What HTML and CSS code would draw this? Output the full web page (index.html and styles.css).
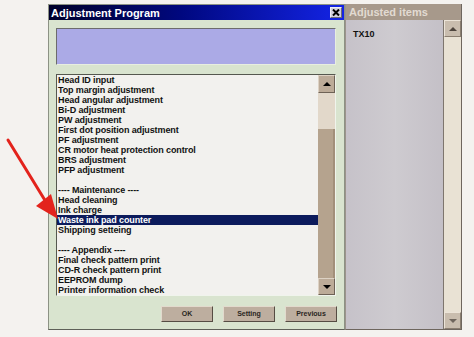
FILE: index.html
```html
<!DOCTYPE html>
<html lang="en">
<head>
    <meta charset="UTF-8">
    <title>Adjustment Program</title>
    <link rel="stylesheet" href="styles.css">
</head>
<body>
    <div class="desk">
        <div class="window">
            <div class="titlebar">
                <span class="title">Adjustment Program</span>
                <span class="close">
                    <svg width="8" height="7" viewBox="0 0 8 7"><path d="M1 0.5L7 6.5M7 0.5L1 6.5" stroke="#000" stroke-width="2"/></svg>
                </span>
            </div>
            <div class="winbody">
                <div class="msgbox"></div>
                <div class="listbox">
                    <ul class="items">
                        <li>Head ID input</li>
                        <li>Top margin adjustment</li>
                        <li>Head angular adjustment</li>
                        <li>Bi-D adjustment</li>
                        <li>PW adjustment</li>
                        <li>First dot position adjustment</li>
                        <li>PF adjustment</li>
                        <li>CR motor heat protection control</li>
                        <li>BRS adjustment</li>
                        <li>PFP adjustment</li>
                        <li></li>
                        <li>---- Maintenance ----</li>
                        <li>Head cleaning</li>
                        <li>Ink charge</li>
                        <li class="selected">Waste ink pad counter</li>
                        <li>Shipping setteing</li>
                        <li></li>
                        <li>---- Appendix ----</li>
                        <li>Final check pattern print</li>
                        <li>CD-R check pattern print</li>
                        <li>EEPROM dump</li>
                        <li>Printer information check</li>
                    </ul>
                    <div class="scrollbar">
                        <div class="sbtn"><i class="up"></i></div>
                        <div class="track"></div>
                        <div class="thumb"></div>
                        <div class="sbtn down"><i class="dn"></i></div>
                    </div>
                </div>
                <div class="buttons">
                    <div class="btn">OK</div>
                    <div class="btn">Setting</div>
                    <div class="btn">Previous</div>
                </div>
            </div>
        </div>
        <div class="panel">
            <div class="panel-title">Adjusted items</div>
            <div class="panel-body">
                <div class="panel-list">TX10</div>
                <div class="pscroll">
                    <div class="pbtn"><i class="up"></i></div>
                    <div class="ptrack"></div>
                    <div class="pbtn"><i class="dn"></i></div>
                </div>
            </div>
        </div>
    </div>
    <svg class="arrow" width="474" height="337" viewBox="0 0 474 337">
        <line x1="8" y1="140" x2="46" y2="202" stroke="#e3231c" stroke-width="3" stroke-linecap="round"/>
        <polygon points="58,219 36,206 51,194" fill="#e3231c"/>
    </svg>
</body>
</html>
```

FILE: styles.css
```css
*{
    margin: 0;
    padding: 0;
    box-sizing: border-box;
}
body{
    width: 474px;
    height: 337px;
    background-color: #f4f2ef;
    font-family: "Liberation Sans", Arial, sans-serif;
    overflow: hidden;
    position: relative;
}
.desk{
    display: flex;
    padding: 4px 0 0 48px;
}

/* main window */
.window{
    width: 297px;
    height: 326px;
    background-color: #d9e4cf;
    border: 1px solid #8c9284;
    border-bottom-color: #5e6058;
    display: flex;
    flex-direction: column;
}
.titlebar{
    height: 15px;
    display: flex;
    align-items: center;
    justify-content: space-between;
    padding: 0 2px 0 2px;
    background: linear-gradient(90deg, #00002a 0%, #000880 45%, #1424e6 100%);
}
.title{
    color: #fff;
    font-size: 11px;
    font-weight: bold;
}
.close{
    width: 12px;
    height: 11px;
    display: flex;
    align-items: center;
    justify-content: center;
    background-color: #d2d0dc;
    border: 1px solid #eeeef4;
    border-right-color: #6a6a78;
    border-bottom-color: #6a6a78;
}
.winbody{
    padding: 8px 0 0 7px;
    display: flex;
    flex-direction: column;
}
.msgbox{
    width: 280px;
    height: 37px;
    background-color: #abaae6;
    border: 1px solid #e8eee0;
    border-top-color: #6c6c6c;
    border-left-color: #6c6c6c;
}
.listbox{
    width: 280px;
    height: 222px;
    margin-top: 9px;
    display: flex;
    border: 1px solid #f0f4ec;
    border-top-color: #55584f;
    border-left-color: #55584f;
}
.items{
    flex: 1;
    list-style: none;
    background-color: #f2f1ee;
    font-size: 9px;
    font-weight: bold;
    letter-spacing: -0.12px;
    line-height: 10px;
    color: #111;
}
.items li{
    height: 10px;
    padding-left: 1px;
    white-space: nowrap;
}
.items li.selected{
    background-color: #0c1b5c;
    color: #fff;
}
.scrollbar{
    width: 17px;
    display: flex;
    flex-direction: column;
    background-color: #e2d8ca;
}
.sbtn{
    height: 18px;
    display: flex;
    align-items: center;
    justify-content: center;
    background-color: #bcab98;
    border: 1px solid #ddd2c4;
    border-right-color: #6e6256;
    border-bottom-color: #6e6256;
}
.sbtn.down{
    height: 17px;
}
.track{
    height: 36px;
}
.thumb{
    flex: 1;
    background-color: #b5a38e;
    border-right: 2px solid #a28f7a;
}
.up{
    width: 0;
    height: 0;
    border-left: 4px solid transparent;
    border-right: 4px solid transparent;
    border-bottom: 4px solid #000;
}
.dn{
    width: 0;
    height: 0;
    border-left: 4px solid transparent;
    border-right: 4px solid transparent;
    border-top: 4px solid #000;
}
.buttons{
    width: 281px;
    margin-top: 10px;
    display: flex;
    justify-content: flex-end;
    gap: 10px;
}
.btn{
    width: 52px;
    height: 16px;
    background-color: #bdae9f;
    border: 1px solid #e2dacd;
    border-right-color: #554c43;
    border-bottom-color: #554c43;
    font-size: 7px;
    font-weight: bold;
    line-height: 14px;
    text-align: center;
    color: #2a2622;
}

/* adjusted items panel */
.panel{
    width: 117px;
    height: 326px;
    display: flex;
    flex-direction: column;
    border-left: 1px solid #9c948c;
    border-right: 1px solid #6e665e;
    border-bottom: 1px solid #6e665e;
}
.panel-title{
    height: 16px;
    background-color: #a7998b;
    color: #e2dbd2;
    font-size: 11px;
    font-weight: bold;
    line-height: 16px;
    padding-left: 3px;
}
.panel-body{
    flex: 1;
    display: flex;
}
.panel-list{
    flex: 1;
    background: linear-gradient(90deg, #c6c2c9 0%, #cecbd0 50%, #c4c0c7 100%);
    border-right: 1px solid #7e766e;
    font-size: 9px;
    font-weight: bold;
    line-height: 10px;
    color: #111;
    padding: 9px 0 0 7px;
}
.pscroll{
    width: 17px;
    display: flex;
    flex-direction: column;
    background-color: #e9e2d4;
}
.ptrack{
    flex: 1;
}
.pbtn{
    height: 17px;
    display: flex;
    align-items: center;
    justify-content: center;
    background-color: #c9bdae;
    border: 1px solid #ece4d8;
    border-right-color: #8a7e70;
    border-bottom-color: #8a7e70;
}
.pbtn .up{
    border-bottom-color: #4e453d;
}
.pbtn .dn{
    border-top-color: #6e655c;
}

.arrow{
    position: absolute;
    left: 0;
    top: 0;
    pointer-events: none;
}
```
